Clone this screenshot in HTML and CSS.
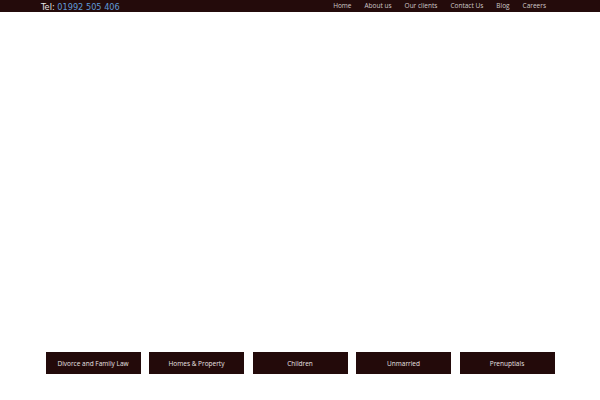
FILE: index.html
```html
<!DOCTYPE html>
<html>
<head>
<meta charset="utf-8">
<link rel="stylesheet" href="styles.css">
</head>
<body>
<header class="topbar">
  <div class="topbar-inner">
    <div class="tel">Tel: <span class="phone">01992 505 406</span></div>
    <nav class="nav">
      <a href="#">Home</a>
      <a href="#">About us</a>
      <a href="#">Our clients</a>
      <a href="#">Contact Us</a>
      <a href="#">Blog</a>
      <a href="#">Careers</a>
    </nav>
  </div>
</header>
<main class="hero"></main>
<section class="services">
  <a class="service" href="#">Divorce and Family Law</a>
  <a class="service" href="#">Homes &amp; Property</a>
  <a class="service" href="#">Children</a>
  <a class="service" href="#">Unmarried</a>
  <a class="service" href="#">Prenuptials</a>
</section>
</body>
</html>
```
FILE: styles.css
```css
html, body {
  margin: 0;
  padding: 0;
  background: #ffffff;
}
body {
  font-family: "Open Sans", "DejaVu Sans", sans-serif;
}
.topbar {
  background: #240b0b;
  height: 12px;
}
.topbar-inner {
  display: flex;
  justify-content: space-between;
  align-items: center;
  height: 12px;
  padding: 0 54px 0 41px;
}
.tel {
  font-family: "DejaVu Sans", sans-serif;
  font-size: 8.2px;
  color: #e6e6e6;
  line-height: 12px;
  padding-top: 1px;
}
.phone {
  color: #5f9ad8;
}
.nav {
  display: flex;
  gap: 13px;
}
.nav a {
  font-size: 6.5px;
  color: #cfc8c8;
  text-decoration: none;
  line-height: 12px;
}
.hero {
  height: 340px;
}
.services {
  display: flex;
  justify-content: center;
  gap: 8.5px;
}
.service {
  width: 95px;
  height: 22px;
  background: #230a0a;
  display: flex;
  align-items: center;
  justify-content: center;
  color: #e8e2e2;
  font-size: 6.5px;
  text-decoration: none;
}
```
